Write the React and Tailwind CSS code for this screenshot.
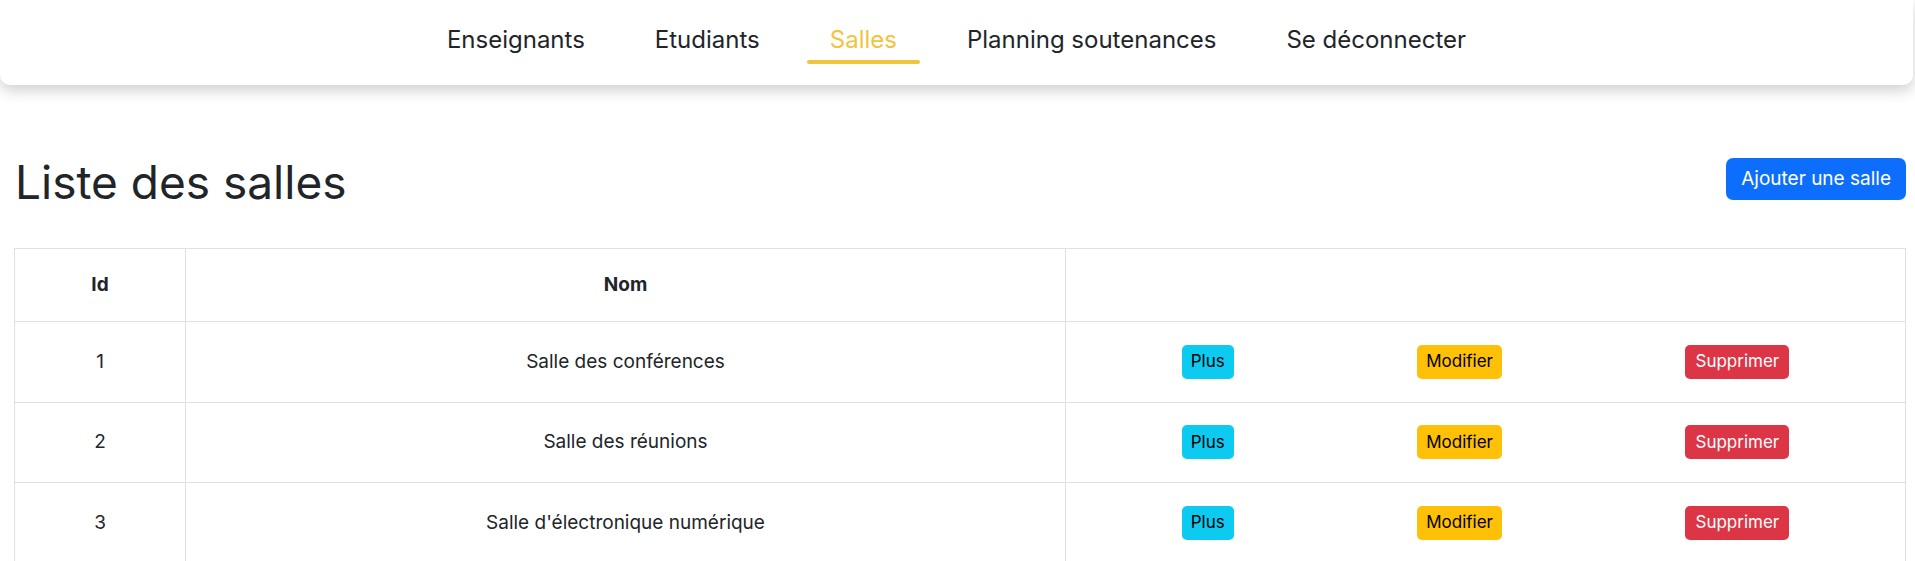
import React from "react";

const rows = [
  { id: 1, nom: "Salle des conférences" },
  { id: 2, nom: "Salle des réunions" },
  { id: 3, nom: "Salle d'électronique numérique" },
];

export default function App() {
  const font = { fontFamily: "Inter, 'Open Sans', sans-serif" };
  return (
    <div className="min-h-[561px] bg-white text-[#212529]" style={font}>
      <nav className="h-[85px] w-[1913px] rounded-b-[10px] bg-white shadow-[0_6px_14px_rgba(0,0,0,0.18)] flex items-center justify-center gap-[24px] pb-[6px]">
        {["Enseignants", "Etudiants", "Salles", "Planning soutenances", "Se déconnecter"].map((t) => (
          <a
            key={t}
            className={
              "relative px-[23px] text-[24px] leading-[30px] " +
              (t === "Salles" ? "text-[#f0c43c]" : "text-[#212529]")
            }
          >
            {t}
            {t === "Salles" && (
              <span className="absolute left-0 right-0 bottom-[-9px] h-[4px] rounded-full bg-[#f0c43c]" />
            )}
          </a>
        ))}
      </nav>

      <div className="pl-[14px] pr-[9px]">
        <div className="mt-[69px] flex items-center justify-between">
          <h1 className="text-[46px] leading-[56px] font-normal text-[#212529] pl-[1px]">Liste des salles</h1>
          <button className="h-[42px] rounded-[7px] bg-[#0d6efd] px-[15px] text-[19px] text-white -translate-y-[3px]">
            Ajouter une salle
          </button>
        </div>

        <table className="mt-[38px] w-full table-fixed border-collapse text-[19px]">
          <colgroup>
            <col className="w-[171px]" />
            <col className="w-[880px]" />
            <col />
          </colgroup>
          <thead>
            <tr className="h-[73px]">
              <th className="border border-[#dee2e6] font-bold">Id</th>
              <th className="border border-[#dee2e6] font-bold">Nom</th>
              <th className="border border-[#dee2e6]"></th>
            </tr>
          </thead>
          <tbody>
            {rows.map((r) => (
              <tr key={r.id} className="h-[80.5px]">
                <td className="border border-[#dee2e6] text-center">{r.id}</td>
                <td className="border border-[#dee2e6] text-center">{r.nom}</td>
                <td className="border border-[#dee2e6] px-[24px]">
                  <div className="flex justify-around items-center">
                    <button className="h-[34px] rounded-[5px] bg-[#0dcaf0] px-[9px] text-[17px] text-black">Plus</button>
                    <button className="h-[34px] rounded-[5px] bg-[#ffc107] px-[9px] text-[17px] text-black">Modifier</button>
                    <button className="h-[34px] rounded-[5px] bg-[#dc3545] px-[10px] text-[17px] text-white">Supprimer</button>
                  </div>
                </td>
              </tr>
            ))}
          </tbody>
        </table>
      </div>
    </div>
  );
}
